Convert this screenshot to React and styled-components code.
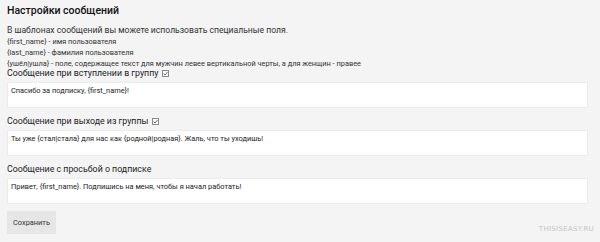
import React from 'react';
import styled, { createGlobalStyle } from 'styled-components';

const GlobalStyle = createGlobalStyle`
  html, body {
    margin: 0;
    padding: 0;
    background: #f4f4f4;
  }
  body {
    font-family: Roboto, "Noto Sans", sans-serif;
    color: #222;
  }
`;

const Page = styled.div`
  width: 600px;
  height: 242px;
  box-sizing: border-box;
  padding: 4px 12px 0 7px;
  position: relative;
  overflow: hidden;
`;

const Title = styled.h3`
  margin: 0;
  font-size: 10.5px;
  font-weight: 500;
  line-height: 14px;
  color: #111;
`;

const Intro = styled.p`
  margin: 6px 0 0;
  font-size: 8.6px;
  line-height: 12px;
  color: #333;
`;

const Hint = styled.p`
  margin: 0;
  font-size: 7.4px;
  line-height: 11px;
  color: #333;
`;

const Field = styled.div`
  margin-top: ${p => p.$gap}px;
`;

const Label = styled.label`
  display: flex;
  align-items: center;
  gap: 4px;
  height: 12px;
  font-size: 8.8px;
  line-height: 12px;
  color: #222;
`;

const Check = styled.span`
  width: 7px;
  height: 7px;
  border: 1px solid #8a8a8a;
  box-sizing: border-box;
  display: inline-flex;
  align-items: center;
  justify-content: center;
  background: #fff;
`;

const Box = styled.div`
  margin-top: 3px;
  height: 26px;
  box-sizing: border-box;
  background: #fff;
  border: 1px solid #ececec;
  padding: 3px 3px;
  font-size: 7.4px;
  line-height: 10px;
  color: #222;
`;

const Button = styled.button`
  display: block;
  margin-top: 7px;
  width: 49px;
  height: 23px;
  border: none;
  background: #e6e6e6;
  font-family: Roboto, sans-serif;
  font-size: 7.4px;
  color: #333;
  padding: 0;
`;

const Watermark = styled.div`
  position: absolute;
  right: 6px;
  bottom: 9px;
  font-family: "DejaVu Sans", sans-serif;
  font-size: 7px;
  letter-spacing: 0.3px;
  color: #c4c4c4;
`;

const Tick = () => (
  <Check>
    <svg width="5" height="5" viewBox="0 0 5 5">
      <path d="M0.6 2.6 L2 4 L4.5 1" fill="none" stroke="#444" strokeWidth="0.8" />
    </svg>
  </Check>
);

const fields = [
  { label: 'Сообщение при вступлении в группу', check: true, text: 'Спасибо за подписку, {first_name}!', gap: -2 },
  { label: 'Сообщение при выходе из группы', check: true, text: 'Ты уже {стал|стала} для нас как {родной|родная}. Жаль, что ты уходишь!', gap: 7 },
  { label: 'Сообщение с просьбой о подписке', check: false, text: 'Привет, {first_name}. Подпишись на меня, чтобы я начал работать!', gap: 7 },
];

export default function App() {
  return (
    <>
      <GlobalStyle />
      <Page>
        <Title>Настройки сообщений</Title>
        <Intro>В шаблонах сообщений вы можете использовать специальные поля.</Intro>
        <Hint>{'{first_name}'} - имя пользователя</Hint>
        <Hint>{'{last_name}'} - фамилия пользователя</Hint>
        <Hint>{'{ушёл|ушла}'} - поле, содержащее текст для мужчин левее вертикальной черты, а для женщин - правее</Hint>
        {fields.map(f => (
          <Field key={f.label} $gap={f.gap}>
            <Label>
              {f.label}
              {f.check && <Tick />}
            </Label>
            <Box>{f.text}</Box>
          </Field>
        ))}
        <Button>Сохранить</Button>
        <Watermark>THISISEASY.RU</Watermark>
      </Page>
    </>
  );
}
